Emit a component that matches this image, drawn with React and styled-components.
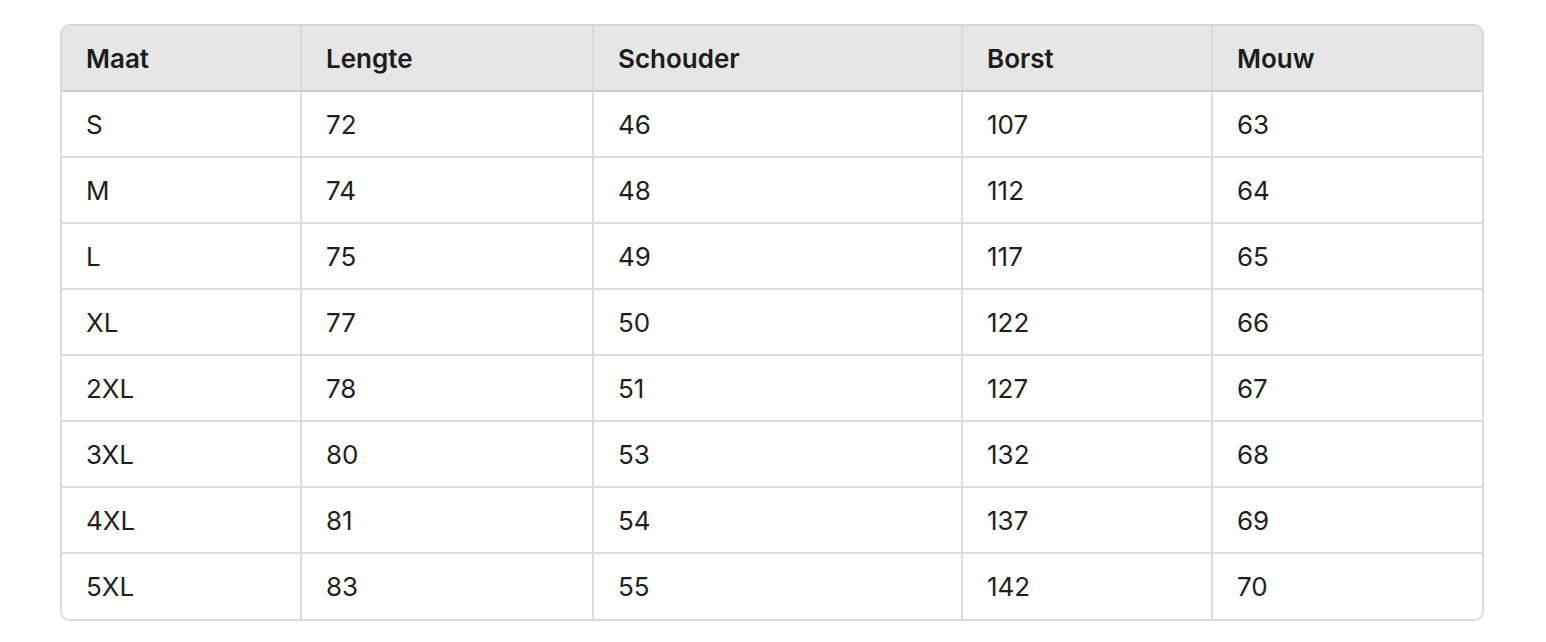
import styled, { createGlobalStyle } from "styled-components";

const GlobalStyle = createGlobalStyle`
  html, body {
    margin: 0;
    padding: 0;
    background: #ffffff;
  }
  body {
    font-family: Inter, "Noto Sans", "Liberation Sans", sans-serif;
    -webkit-font-smoothing: antialiased;
  }
`;

const columns = [
  { key: "maat", label: "Maat", width: 240 },
  { key: "lengte", label: "Lengte", width: 292 },
  { key: "schouder", label: "Schouder", width: 369 },
  { key: "borst", label: "Borst", width: 250 },
  { key: "mouw", label: "Mouw", width: 271 },
];

const rows = [
  ["S", "72", "46", "107", "63"],
  ["M", "74", "48", "112", "64"],
  ["L", "75", "49", "117", "65"],
  ["XL", "77", "50", "122", "66"],
  ["2XL", "78", "51", "127", "67"],
  ["3XL", "80", "53", "132", "68"],
  ["4XL", "81", "54", "137", "69"],
  ["5XL", "83", "55", "142", "70"],
];

const Page = styled.div`
  padding: 24px 0 0 60px;
`;

const Frame = styled.div`
  width: 1424px;
  border: 2px solid #d9d9d9;
  border-radius: 10px;
  overflow: hidden;
  box-sizing: border-box;
`;

const Table = styled.table`
  width: 100%;
  border-collapse: separate;
  border-spacing: 0;
  table-layout: fixed;
`;

const HeadCell = styled.th`
  height: 66px;
  padding: 0 24px;
  text-align: left;
  font-size: 26px;
  font-weight: 600;
  color: #1c1c1c;
  background: #e6e6e6;
  border-bottom: 2px solid #c9c9c9;
  border-right: ${(p) => (p.$last ? "none" : "2px solid #d9d9d9")};
  box-sizing: border-box;
`;

const Cell = styled.td`
  height: ${(p) => (p.$lastRow ? "65px" : "66px")};
  padding: 0 24px;
  font-size: 26px;
  font-weight: 400;
  color: #1f1f1f;
  background: #ffffff;
  border-bottom: ${(p) => (p.$lastRow ? "none" : "2px solid #dcdcdc")};
  border-right: ${(p) => (p.$last ? "none" : "2px solid #dcdcdc")};
  box-sizing: border-box;
`;

export default function App() {
  return (
    <Page>
      <GlobalStyle />
      <Frame>
        <Table>
          <colgroup>
            {columns.map((c) => (
              <col key={c.key} style={{ width: c.width }} />
            ))}
          </colgroup>
          <thead>
            <tr>
              {columns.map((c, i) => (
                <HeadCell key={c.key} $last={i === columns.length - 1}>
                  {c.label}
                </HeadCell>
              ))}
            </tr>
          </thead>
          <tbody>
            {rows.map((r, ri) => (
              <tr key={r[0]}>
                {r.map((v, ci) => (
                  <Cell
                    key={ci}
                    $last={ci === r.length - 1}
                    $lastRow={ri === rows.length - 1}
                  >
                    {v}
                  </Cell>
                ))}
              </tr>
            ))}
          </tbody>
        </Table>
      </Frame>
    </Page>
  );
}
